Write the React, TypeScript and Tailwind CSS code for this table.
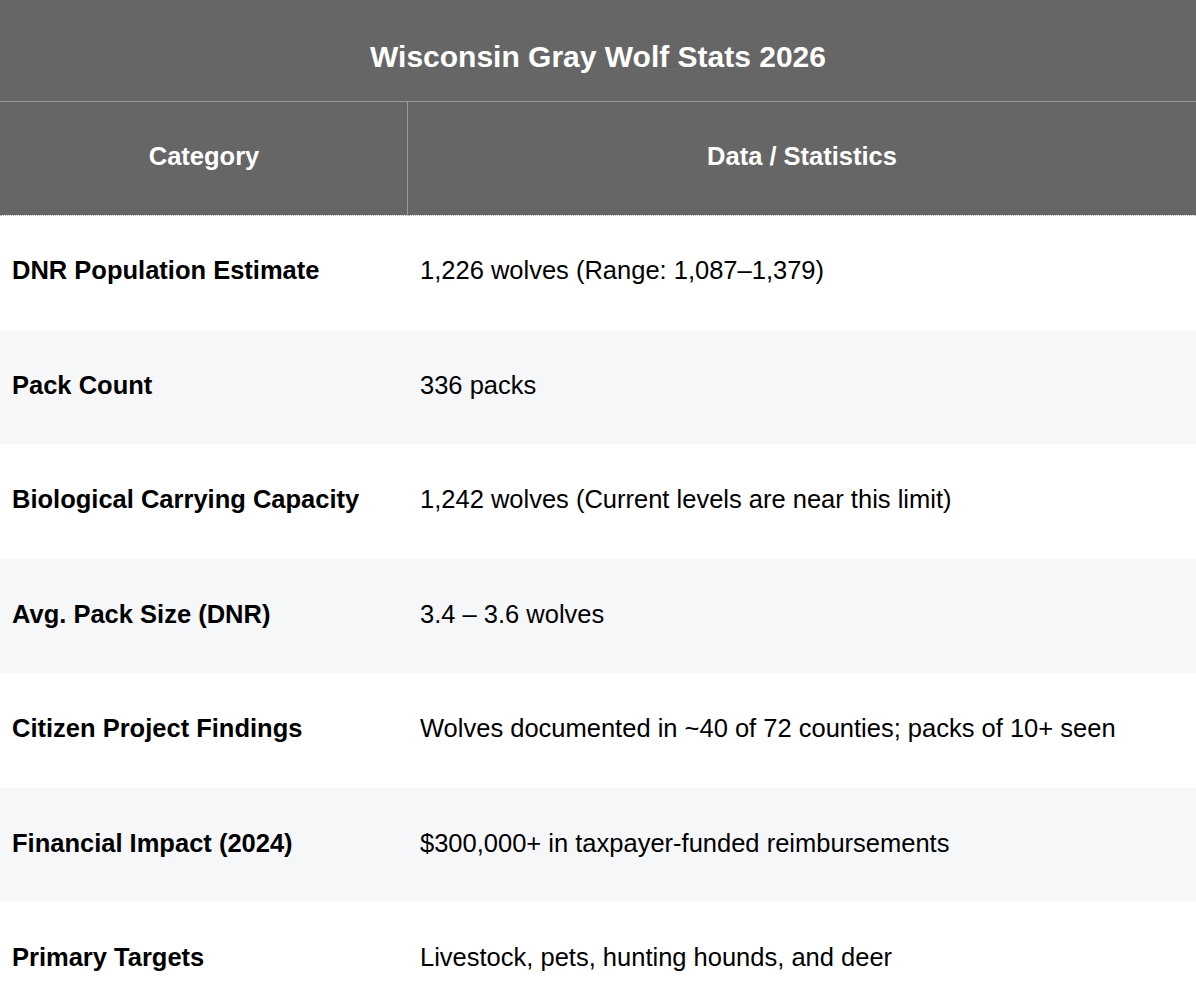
const rows: [string, string][] = [
  ['DNR Population Estimate', '1,226 wolves (Range: 1,087–1,379)'],
  ['Pack Count', '336 packs'],
  ['Biological Carrying Capacity', '1,242 wolves (Current levels are near this limit)'],
  ['Avg. Pack Size (DNR)', '3.4 – 3.6 wolves'],
  ['Citizen Project Findings', 'Wolves documented in ~40 of 72 counties; packs of 10+ seen'],
  ['Financial Impact (2024)', '$300,000+ in taxpayer-funded reimbursements'],
  ['Primary Targets', 'Livestock, pets, hunting hounds, and deer'],
]

export default function App() {
  return (
    <div className="min-h-screen bg-white font-['Liberation_Sans',Arial,sans-serif] text-black">
      <table className="w-full table-fixed border-collapse">
        <colgroup>
          <col className="w-[408px]" />
          <col />
        </colgroup>
        <thead>
          <tr>
            <th
              colSpan={2}
              className="h-[101px] border-b border-[#999] bg-[#666] pt-[12px] text-center text-[30px] font-bold text-white"
            >
              Wisconsin Gray Wolf Stats 2026
            </th>
          </tr>
          <tr>
            <th className="h-[114px] border-b border-dotted border-b-[#bbb] bg-[#666] pb-1 text-center text-[25.5px] font-bold text-white shadow-[inset_-1px_0_0_#999]">
              Category
            </th>
            <th className="h-[114px] border-b border-dotted border-b-[#bbb] bg-[#666] pb-1 text-center text-[25.5px] font-bold text-white">
              Data / Statistics
            </th>
          </tr>
        </thead>
        <tbody>
          {rows.map(([cat, val], i) => (
            <tr key={cat} className={i % 2 === 1 ? 'bg-[#f6f7f9]' : 'bg-white'}>
              <td className="h-[114.5px] px-3 pb-1 text-[25.5px] font-bold">{cat}</td>
              <td className="h-[114.5px] px-3 pb-1 text-[25.5px]">{val}</td>
            </tr>
          ))}
        </tbody>
      </table>
    </div>
  )
}
